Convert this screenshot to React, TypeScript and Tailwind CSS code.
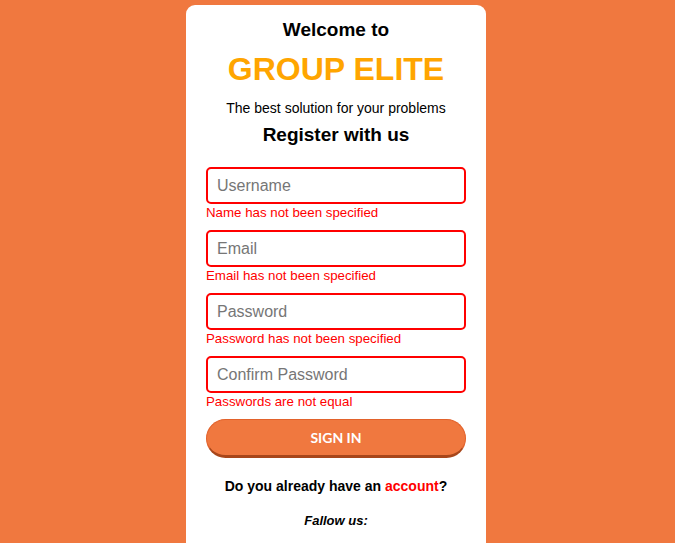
import React from 'react';

const fields = [
  { placeholder: 'Username', error: 'Name has not been specified', type: 'text' },
  { placeholder: 'Email', error: 'Email has not been specified', type: 'email' },
  { placeholder: 'Password', error: 'Password has not been specified', type: 'password' },
  { placeholder: 'Confirm Password', error: 'Passwords are not equal', type: 'password' },
];

export default function App() {
  return (
    <div className="min-h-[543px] bg-[#f0783f] flex justify-center pt-[5px] pr-[3px] font-['Liberation_Sans',Arial,sans-serif]">
      <div className="w-[300px] bg-white rounded-t-[9px] px-5 pt-[12px] pb-6 flex flex-col items-center">
        <h2 className="text-[19px] font-bold leading-[26px] text-black">Welcome to</h2>
        <h1 className="mt-[7px] text-[32px] font-bold leading-[38px] text-[#ffa500]">GROUP ELITE</h1>
        <p className="mt-[11px] text-[14px] leading-[18px] text-black">The best solution for your problems</p>
        <h3 className="mt-[6px] text-[19px] font-bold leading-[24px] text-black">Register with us</h3>

        <form className="mt-[20px] w-full flex flex-col gap-[9px]">
          {fields.map((f) => (
            <div key={f.placeholder} className="flex flex-col">
              <input
                type={f.type}
                placeholder={f.placeholder}
                className="h-[37px] w-full rounded-[5px] border-2 border-[#ff0000] px-[9px] text-[16px] text-black placeholder:text-[#767676] outline-none"
              />
              <span className="text-[13.3px] leading-[17px] text-[#ff0000]">{f.error}</span>
            </div>
          ))}
          <button
            type="button"
            className="h-[39px] w-full rounded-full border border-[#e2622b] border-b-[3px] border-b-[#a8461a] bg-[#f0783f] text-[14px] font-bold text-white font-['Lato',sans-serif]"
          >
            SIGN IN
          </button>
        </form>

        <p className="mt-[19px] text-[14px] font-bold leading-[18px] text-black">
          Do you already have an <a className="text-[#ff0000]">account</a>?
        </p>
        <p className="mt-[17px] text-[13px] font-bold italic leading-[17px] text-black">Fallow us:</p>
      </div>
    </div>
  );
}
